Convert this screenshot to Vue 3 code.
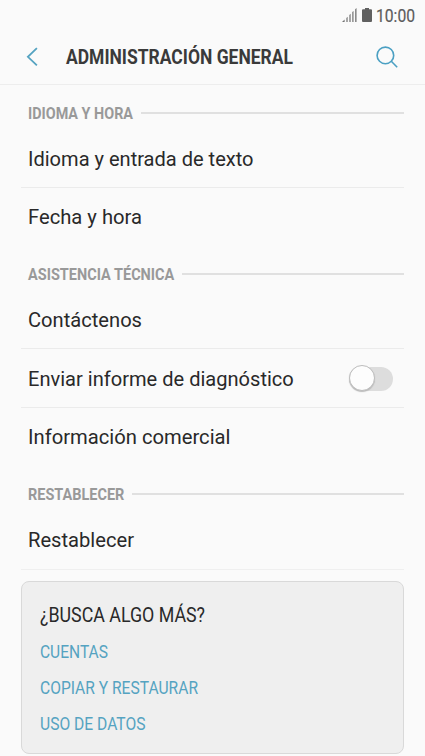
<script setup>
import { h } from 'vue'

// One line of text set to an exact measure, with its baseline 18px below the top.
const FitText = (props) =>
  h('svg', { class: 'fit', width: props.w, height: 24 }, [
    h('text', { x: 0, y: 18, textLength: props.w, lengthAdjust: 'spacingAndGlyphs' }, props.text)
  ])
FitText.props = ['text', 'w']

const sections = [
  {
    title: 'IDIOMA Y HORA', w: 105,
    rows: [
      { text: 'Idioma y entrada de texto', w: 225.5 },
      { text: 'Fecha y hora', w: 114 }
    ]
  },
  {
    title: 'ASISTENCIA TÉCNICA', w: 146.3,
    rows: [
      { text: 'Contáctenos', w: 114 },
      { text: 'Enviar informe de diagnóstico', w: 265.8, toggle: true },
      { text: 'Información comercial', w: 202.5 }
    ]
  },
  {
    title: 'RESTABLECER', w: 96.3,
    rows: [{ text: 'Restablecer', w: 106, last: true }]
  }
]
const links = [
  { text: 'CUENTAS', w: 68 },
  { text: 'COPIAR Y RESTAURAR', w: 158 },
  { text: 'USO DE DATOS', w: 105.5 }
]
</script>

<template>
  <main class="screen">
    <div class="status">
      <svg class="signal" width="15" height="14" viewBox="0 0 15 14">
        <path d="M0 14L2.6 11.4V14ZM4.4 10L5.6 8.8V14H4.4ZM7.4 7L8.6 5.8V14H7.4ZM10.3 4.1L11.5 2.9V14H10.3ZM13.2 1.3L14.5 0V14H13.2Z" />
      </svg>
      <svg class="battery" width="10" height="14" viewBox="0 0 10 14">
        <path d="M3 0H7V1.3H9Q10 1.3 10 2.3V13Q10 14 9 14H1Q0 14 0 13V2.3Q0 1.3 1 1.3H3Z" />
      </svg>
      <FitText class="clock" text="10:00" :w="39" />
    </div>
    <header class="bar">
      <svg class="back" width="12" height="20" viewBox="0 0 12 20">
        <path d="M10.9 1.2L1.9 9.8L10.9 18.4" />
      </svg>
      <FitText class="title" text="ADMINISTRACIÓN GENERAL" :w="227" />
      <svg class="search" width="23" height="23" viewBox="0 0 23 23">
        <circle cx="9.4" cy="9.4" r="8.3" />
        <path d="M15.3 15.3L21.2 21.2" />
      </svg>
    </header>
    <section v-for="s in sections" :key="s.title">
      <div class="section-head">
        <FitText class="section-title" :text="s.title" :w="s.w" />
        <span class="rule"></span>
      </div>
      <div class="rows">
        <div v-for="r in s.rows" :key="r.text" class="row" :class="{ last: r.last }">
          <FitText class="label" :text="r.text" :w="r.w" />
          <span v-if="r.toggle" class="toggle"><span class="knob"></span></span>
        </div>
      </div>
    </section>
    <aside class="card">
      <FitText class="question" text="¿BUSCA ALGO MÁS?" :w="165" />
      <FitText v-for="l in links" :key="l.text" class="link" :text="l.text" :w="l.w" />
    </aside>
  </main>
</template>

<style>
body { background: #fafafa; }
.fit { display: block; flex: none; overflow: visible; font-family: Roboto, sans-serif; }
</style>

<style scoped>
.screen { box-sizing: border-box; height: 756px; overflow: hidden; background: #fafafa; }
.status { display: flex; height: 30px; padding: 4px 10px 0 0; box-sizing: border-box; justify-content: flex-end; align-items: flex-start; }
.signal { fill: #707070; margin: 4px 5px 0 0; }
.battery { fill: #606060; margin: 4px 4px 0 0; }
.clock { font-size: 18px; fill: #5c5c5c; stroke: #5c5c5c; stroke-width: 0.2px; }
.bar { display: flex; box-sizing: border-box; height: 55px; padding: 16px 26px 0 26px; border-bottom: 1px solid #ededed; align-items: flex-start; }
.back { margin: 1px 28px 0 0; fill: none; stroke: #55a3c1; stroke-width: 1.8; }
.title { font-size: 20px; font-weight: 700; fill: #3a3a3a; }
.search { margin: 0 0 0 auto; fill: none; stroke: #4ba0c3; stroke-width: 1.6; }
.section-head { display: flex; height: 44px; box-sizing: border-box; padding: 16px 21px 0 28px; }
.section-title { font-size: 16.3px; font-weight: 700; fill: #999; }
.rule { flex: 1; height: 2px; margin: 11px 0 0 7.5px; background: #e0e0e0; }
.rows { padding: 0 21px; }
.row { display: flex; box-sizing: border-box; height: 59px; padding: 19px 11px 0 7px; border-bottom: 1px solid #ebebeb; }
.row:last-child { height: 58px; padding-top: 18px; border-bottom: 0; }
.row.last { height: 60px; padding-top: 19px; border-bottom: 1px solid #efefef; }
.label { font-size: 20.3px; fill: #292929; }
.toggle { display: flex; align-items: center; box-sizing: border-box; width: 44px; height: 24px; margin: -1px 0 0 auto; border-radius: 12px; background: #ddd; }
.knob { box-sizing: border-box; width: 26px; height: 26px; margin-top: -2px; flex: none; border: 1px solid #bdbdbd; border-radius: 50%; background: #fdfdfd; box-shadow: 0 1px 1px #bbb; }
.card { display: flex; flex-direction: column; gap: 12px; box-sizing: border-box; height: 173px; margin: 11px 21px 0; padding: 22px 18px 0; border: 1px solid #d9d9d9; border-radius: 8px; background: #efefef; }
.question { font-size: 20px; fill: #292929; }
.link { font-size: 17.7px; fill: #55a3c1; }
</style>
